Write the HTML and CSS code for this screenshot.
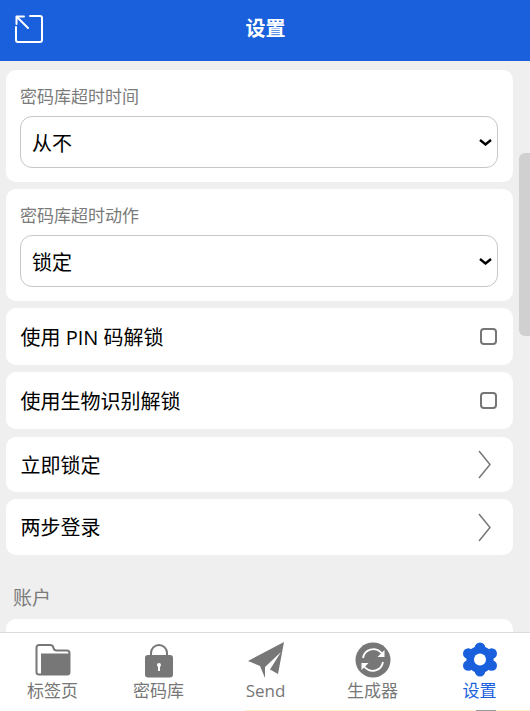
FILE: index.html
```html
<!DOCTYPE html>
<html lang="zh-CN">
<head>
<meta charset="utf-8">
<title>设置</title>
<link rel="stylesheet" href="styles.css">
</head>
<body>
<header class="topbar">
  <svg class="pop-icon" viewBox="0 0 28 28" fill="none" stroke="#fff" stroke-width="2" stroke-linecap="round" stroke-linejoin="round">
    <path d="M1 12V25a2 2 0 0 0 2 2H25a2 2 0 0 0 2-2V3a2 2 0 0 0-2-2H15"/>
    <path d="M2 2L13 13M1.500 9V1.500H9"/>
  </svg>
  <h1 class="title">设置</h1>
</header>
<main class="content">
  <div class="scroll-thumb"></div>
  <section class="card card-field">
    <label class="field-label" for="timeout">密码库超时时间</label>
    <div class="select-wrap">
      <select class="field-select" id="timeout"><option>从不</option></select>
      <svg class="select-chev" viewBox="0 0 13 7" fill="none" stroke="#000" stroke-width="2.400"><path d="M1 1L6.500 5.500L12 1"/></svg>
    </div>
  </section>
  <section class="card card-field">
    <label class="field-label" for="action">密码库超时动作</label>
    <div class="select-wrap">
      <select class="field-select" id="action"><option>锁定</option></select>
      <svg class="select-chev" viewBox="0 0 13 7" fill="none" stroke="#000" stroke-width="2.400"><path d="M1 1L6.500 5.500L12 1"/></svg>
    </div>
  </section>
  <div class="card row row-check"><span>使用 PIN 码解锁</span><input class="check" type="checkbox"></div>
  <div class="card row row-check"><span>使用生物识别解锁</span><input class="check" type="checkbox"></div>
  <div class="card row row-link row-link-first"><span>立即锁定</span>
    <svg class="chev" viewBox="0 0 13 29" fill="none" stroke="#777" stroke-width="1.500"><path d="M1 1L12 14.500L1 28"/></svg></div>
  <div class="card row row-link"><span class="row-text-up">两步登录</span>
    <svg class="chev" viewBox="0 0 13 29" fill="none" stroke="#777" stroke-width="1.500"><path d="M1 1L12 14.500L1 28"/></svg></div>
  <h2 class="section-title">账户</h2>
  <div class="card row row-check"></div>
</main>
<nav class="tabs">
  <div class="tab">
    <svg class="tab-icon" width="36" height="36" viewBox="0 0 36 36">
      <path d="M1.500 5.500a2.500 2.500 0 0 1 2.500-2.500h11.500c2 0 2.500 1 3 3s1 2.500 3 2.500h10.500a2.500 2.500 0 0 1 2.500 2.500v19a2.500 2.500 0 0 1-2.500 2.500H4a2.500 2.500 0 0 1-2.500-2.500z" fill="#fff" stroke="#777" stroke-width="2"/>
      <path d="M6 11.500h28v19a2 2 0 0 1-2 2H6z" fill="#777"/>
    </svg>
    <span>标签页</span>
  </div>
  <div class="tab">
    <svg class="tab-icon" width="36" height="36" viewBox="0 0 36 36">
      <path d="M10 17V11a8 8 0 0 1 16 0v6" fill="none" stroke="#777" stroke-width="2"/>
      <rect x="4" y="13" width="28" height="22.500" rx="3" fill="#777"/>
      <circle cx="18" cy="23" r="2" fill="#fff"/><rect x="17" y="23" width="2" height="6" fill="#fff"/>
    </svg>
    <span>密码库</span>
  </div>
  <div class="tab">
    <svg class="tab-icon" width="36" height="36" viewBox="0 0 36 36">
      <path d="M36 0L30 32L22 27.500L33 10L17 25V36L12 24L0 19Z" fill="#777"/>
    </svg>
    <span class="latin">Send</span>
  </div>
  <div class="tab">
    <svg class="tab-icon" width="36" height="36" viewBox="0 0 36 36">
      <circle cx="18" cy="18" r="17.500" fill="#777"/>
      <path d="M8 16a10.500 10.500 0 0 1 18-5.500l2 2.500M28 20a10.500 10.500 0 0 1-18 5.500l-2-2.500" fill="none" stroke="#fff" stroke-width="1.800"/>
      <path d="M29.500 8v7h-7zM6.500 28v-7h7z" fill="#fff"/>
    </svg>
    <span>生成器</span>
  </div>
  <div class="tab tab-active">
    <svg class="tab-icon" width="36" height="36" viewBox="0 0 36 36" fill="#1a5fdc">
      <circle cx="18" cy="17.500" r="13.600"/>
      <circle cx="18" cy="5.800" r="5.300"/>
      <circle cx="18" cy="29.200" r="5.300"/>
      <circle cx="6.300" cy="11.500" r="5.300"/>
      <circle cx="29.700" cy="11.500" r="5.300"/>
      <circle cx="6.300" cy="23.500" r="5.300"/>
      <circle cx="29.700" cy="23.500" r="5.300"/>
      <circle cx="18" cy="17.500" r="6" fill="#fff"/>
    </svg>
    <span>设置</span>
  </div>
</nav>
<div class="edge-strip"><i class="edge-mark"></i></div>
</body>
</html>
```
FILE: styles.css
```css
* { box-sizing: border-box; }
html, body { margin: 0; height: 100%; overflow: hidden; }
body {
  display: flex;
  flex-direction: column;
  background: #fff;
  font-family: "Open Sans", "Noto Sans CJK SC", sans-serif;
  color: #000;
}
.topbar {
  flex: 0 0 61px;
  background: #1a5fdc;
  display: flex;
  align-items: center;
  justify-content: center;
  position: relative;
}
.pop-icon { position: absolute; left: 15px; top: 15px; width: 28px; height: 28px; }
.title { margin: 0; font-size: 20px; font-weight: 700; color: #fff; line-height: 1; padding: 0 0 3px 1px; }
.content {
  flex: 1 1 auto;
  min-height: 0;
  overflow: hidden;
  position: relative;
  background: #efefef;
  padding: 9px 17px 0 6px;
  display: flex;
  flex-direction: column;
  gap: 7px;
}
.scroll-thumb {
  position: absolute;
  right: 0;
  top: 92px;
  width: 11px;
  height: 183px;
  background: #d0d0d0;
  border-radius: 6px 0 0 6px;
}
.card { background: #fff; border-radius: 10px; flex: none; }
.card-field { height: 112px; padding: 15px 15px 0 14px; }
.field-label { display: block; font-size: 17px; line-height: 24px; color: #7b7b7b; margin-bottom: 7px; }
.select-wrap { position: relative; }
.select-chev { position: absolute; right: 6px; top: 23px; width: 13px; height: 7px; pointer-events: none; }
.field-select {
  appearance: none;
  display: block;
  width: 100%;
  height: 52px;
  border: 1px solid #c6c6c6;
  border-radius: 12px;
  background: #fff;
  padding: 2px 11px 0;
  font-family: inherit;
  font-size: 20px;
  color: #000;
}
.row {
  display: flex;
  align-items: center;
  justify-content: space-between;
  font-size: 20px;
  padding-left: 14.500px;
}
.row-check { height: 57px; padding-right: 16px; }
.row-link { height: 56px; padding-right: 22px; }
.row-link-first { margin-top: 1px; height: 55px; }
.row-text-up { padding-bottom: 2px; }
.check {
  appearance: none;
  margin: 0;
  width: 17px;
  height: 17px;
  border: 2px solid #767676;
  border-radius: 4px;
  background: #fff;
}
.chev { width: 13px; height: 29px; }
.section-title {
  margin: 24px 0 2px 7px;
  font-size: 19px;
  font-weight: 400;
  line-height: 24px;
  color: #7b7b7b;
}
.tabs {
  flex: 0 0 78px;
  background: #fff;
  border-top: 1px solid #dcdcdc;
  display: grid;
  grid-template-columns: 105px repeat(4, 107px);
  padding-top: 9px;
}
.tab {
  display: flex;
  flex-direction: column;
  align-items: center;
  color: #777;
  font-size: 17px;
  line-height: 22px;
}
.tab-icon { display: block; flex: none; margin-bottom: 2px; }
.tab-active { color: #1a5fdc; }
.edge-strip { flex: 0 0 1px; margin-left: 245px; background: #fdf0cf; display: flex; justify-content: flex-end; padding-right: 34px; }
.edge-mark { display: block; width: 20px; height: 1px; background: #9a9a9a; }
```
